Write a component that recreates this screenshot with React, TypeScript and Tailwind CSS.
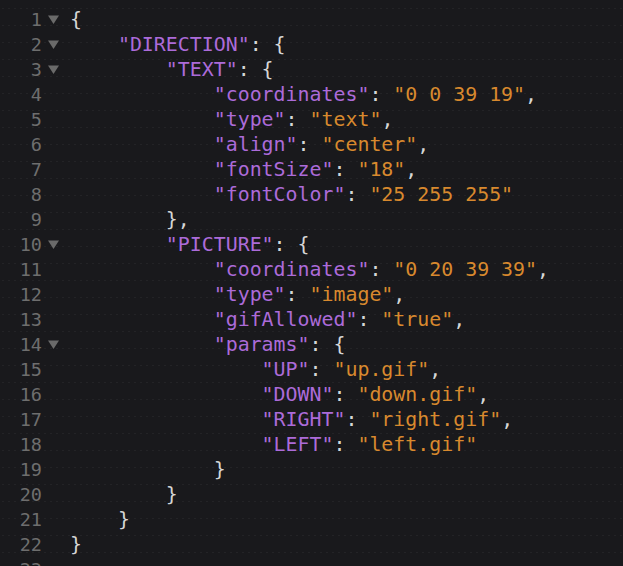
import React from "react";

type Tok = [string, "k" | "s" | "p"];

const lines: { fold?: boolean; toks: Tok[] }[] = [
  { fold: true, toks: [["{", "p"]] },
  { fold: true, toks: [["    ", "p"], ['"DIRECTION"', "k"], [": {", "p"]] },
  { fold: true, toks: [["        ", "p"], ['"TEXT"', "k"], [": {", "p"]] },
  { toks: [["            ", "p"], ['"coordinates"', "k"], [": ", "p"], ['"0 0 39 19"', "s"], [",", "p"]] },
  { toks: [["            ", "p"], ['"type"', "k"], [": ", "p"], ['"text"', "s"], [",", "p"]] },
  { toks: [["            ", "p"], ['"align"', "k"], [": ", "p"], ['"center"', "s"], [",", "p"]] },
  { toks: [["            ", "p"], ['"fontSize"', "k"], [": ", "p"], ['"18"', "s"], [",", "p"]] },
  { toks: [["            ", "p"], ['"fontColor"', "k"], [": ", "p"], ['"25 255 255"', "s"]] },
  { toks: [["        },", "p"]] },
  { fold: true, toks: [["        ", "p"], ['"PICTURE"', "k"], [": {", "p"]] },
  { toks: [["            ", "p"], ['"coordinates"', "k"], [": ", "p"], ['"0 20 39 39"', "s"], [",", "p"]] },
  { toks: [["            ", "p"], ['"type"', "k"], [": ", "p"], ['"image"', "s"], [",", "p"]] },
  { toks: [["            ", "p"], ['"gifAllowed"', "k"], [": ", "p"], ['"true"', "s"], [",", "p"]] },
  { fold: true, toks: [["            ", "p"], ['"params"', "k"], [": {", "p"]] },
  { toks: [["                ", "p"], ['"UP"', "k"], [": ", "p"], ['"up.gif"', "s"], [",", "p"]] },
  { toks: [["                ", "p"], ['"DOWN"', "k"], [": ", "p"], ['"down.gif"', "s"], [",", "p"]] },
  { toks: [["                ", "p"], ['"RIGHT"', "k"], [": ", "p"], ['"right.gif"', "s"], [",", "p"]] },
  { toks: [["                ", "p"], ['"LEFT"', "k"], [": ", "p"], ['"left.gif"', "s"]] },
  { toks: [["            }", "p"]] },
  { toks: [["        }", "p"]] },
  { toks: [["    }", "p"]] },
  { toks: [["}", "p"]] },
  { toks: [["", "p"]] },
];

function Tri() {
  return (
    <svg width="11" height="9" viewBox="0 0 11 9" className="block">
      <path d="M0 0.5 L11 0.5 L5.5 9 Z" fill="#6a6a6a" />
    </svg>
  );
}

export default function App() {
  return (
    <div
      className="w-[623px] h-[566px] overflow-hidden bg-[#19191c] bg-[radial-gradient(circle,rgba(255,255,255,0.045)_0.8px,transparent_1px)] bg-[length:6px_17px] pt-[7px]"
      style={{ fontFamily: '"DejaVu Sans Mono", "Liberation Mono", monospace' }}
    >
      {lines.map((l, i) => (
        <div key={i} className="flex items-center h-[25px] text-[19.9px] leading-[25px]">
          <div className="w-[42px] text-right text-[#6e6e6e] text-[18.5px]">{i + 1}</div>
          <div className="w-[28px] flex items-center pl-[6px]">{l.fold ? <Tri /> : null}</div>
          <div className="whitespace-pre">
            {l.toks.map(([t, k], j) => (
              <span
                key={j}
                className={
                  k === "k" ? "text-[#ac6bd9]" : k === "s" ? "text-[#d8892e]" : "text-[#d6d6d6]"
                }
              >
                {t}
              </span>
            ))}
          </div>
        </div>
      ))}
    </div>
  );
}
